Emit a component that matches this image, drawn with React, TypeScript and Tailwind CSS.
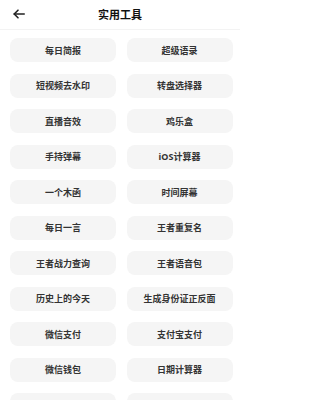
const tools = [
    "每日简报", "超级语录",
    "短视频去水印", "转盘选择器",
    "直播音效", "鸡乐盒",
    "手持弹幕", "iOS计算器",
    "一个木函", "时间屏幕",
    "每日一言", "王者重复名",
    "王者战力查询", "王者语音包",
    "历史上的今天", "生成身份证正反面",
    "微信支付", "支付宝支付",
    "微信钱包", "日期计算器",
]

export default function App() {
    return (
        <div
            className="w-[240px] h-[400px] overflow-hidden bg-white flex flex-col"
            style={{ fontFamily: '"Noto Sans", "Noto Sans CJK SC", sans-serif' }}
        >
            <header className="h-[30px] shrink-0 relative flex items-center justify-center border-b border-[#f3f3f3]">
                <button className="absolute left-[13px] top-[9px] text-[#222]">
                    <svg width="12" height="10" viewBox="0 0 12 10" fill="none" stroke="currentColor" strokeWidth="1.6" strokeLinecap="round" strokeLinejoin="round">
                        <path d="M11.2 5H1.2" />
                        <path d="M5 1.2L1.2 5L5 8.8" />
                    </svg>
                </button>
                <h1 className="text-[11px] font-bold text-[#111] leading-none">实用工具</h1>
            </header>

            <div className="grid grid-cols-2 gap-x-[10.5px] gap-y-[11.5px] pl-[10px] pr-[7.5px] pt-[8px]">
                {tools.map((name) => (
                    <button
                        key={name}
                        className="h-[24px] rounded-[8px] bg-[#f5f5f5] flex items-center justify-center text-[9px] font-bold text-[#333] leading-none"
                    >
                        {name}
                    </button>
                ))}
                {/* next row, cut off by the window */}
                <div className="h-[24px] rounded-[8px] bg-[#f5f5f5]" />
                <div className="h-[24px] rounded-[8px] bg-[#f5f5f5]" />
            </div>
        </div>
    )
}
